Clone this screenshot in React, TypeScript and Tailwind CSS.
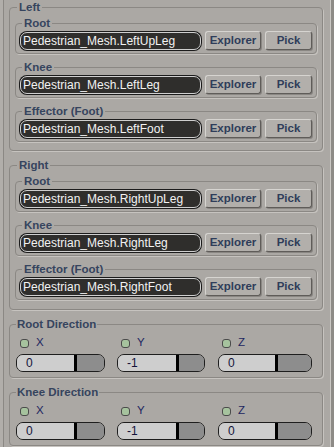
import React from "react";

const font = { fontFamily: '"Liberation Sans", Arial, sans-serif' };

type BoxProps = {
  label: string;
  legendClass?: string;
  className?: string;
  children: React.ReactNode;
};

const Group: React.FC<BoxProps> = ({ label, legendClass = "", className = "", children }) => {
  return (
    <fieldset
      className={
        "border border-[#8b8884] rounded-[4px] shadow-[1px_1px_0_#c6c3bf] " + className
      }
    >
      <legend
        className={
          "text-[11.5px] leading-[13px] font-bold text-[#36445e] " + legendClass
        }
      >
        {label}
      </legend>
      {children}
    </fieldset>
  );
};

const BoneRow: React.FC<{ label: string; value: string }> = ({ label, value }) => {
  return (
    <Group label={label} className="px-[4px] pt-[1px] pb-[3px]" legendClass="ml-[2px] px-[2px]">
      <div className="h-[19px] flex items-end gap-[4px]">
        <div className="flex-1 h-[18px] rounded-[7px] bg-[#2f2e2c] border border-[#cfcfcf] shadow-[0_0_0_1px_#1c1c1c] flex items-center pl-[2px] text-[12px] text-[#f2f2f2] leading-none">
          {value}
        </div>
        <button className="w-[56px] h-[19px] rounded-[3px] bg-[#b2afab] border border-[#d6d4d0] border-b-[#5f5c59] border-r-[#5f5c59] shadow-[1px_1px_0_#8a8783] text-[11.5px] font-bold text-[#2f3d5a] leading-none">
          Explorer
        </button>
        <button className="w-[47px] h-[19px] rounded-[3px] bg-[#b2afab] border border-[#d6d4d0] border-b-[#5f5c59] border-r-[#5f5c59] shadow-[1px_1px_0_#8a8783] text-[11.5px] font-bold text-[#2f3d5a] leading-none">
          Pick
        </button>
      </div>
    </Group>
  );
};

const Side: React.FC<{ label: string; side: string; pb: string }> = ({ label, side, pb }) => {
  return (
    <Group label={label} className={"px-[5px] pt-[3px] " + pb} legendClass="ml-[2px] px-[2px]">
      <div className="flex flex-col gap-[7px]">
        <BoneRow label="Root" value={`Pedestrian_Mesh.${side}UpLeg`} />
        <BoneRow label="Knee" value={`Pedestrian_Mesh.${side}Leg`} />
        <BoneRow label="Effector (Foot)" value={`Pedestrian_Mesh.${side}Foot`} />
      </div>
    </Group>
  );
};

const axes = [
  { name: "X", value: "0", slider: "w-[89px]", knob: "w-[30px]" },
  { name: "Y", value: "-1", slider: "w-[88px]", knob: "w-[28px]" },
  { name: "Z", value: "0", slider: "w-[94px]", knob: "w-[36px]" },
];

const Direction: React.FC<{ label: string }> = ({ label }) => {
  return (
    <Group label={label} className="pl-[6px] pt-[6px] pb-[5px]" legendClass="px-[1px]">
      <div className="flex">
        {axes.map((a) => (
          <div key={a.name} className="w-[101px] flex flex-col gap-[5px]">
            <div className="h-[12px] flex items-center pl-[4px] gap-[7px]">
              <span className="block w-[9px] h-[9px] rounded-[3px] bg-[#a6c39e] border border-[#4b4b4b]" />
              <span className="text-[11.5px] leading-none text-[#1d2660]">{a.name}</span>
            </div>
            <div
              className={
                a.slider +
                " h-[18px] rounded-[7px] border border-[#1e1e1e] overflow-hidden flex"
              }
            >
              <div className="flex-1 bg-[#cecece] flex items-center pl-[9px] text-[12px] leading-none text-[#14143a]">
                {a.value}
              </div>
              <div className={a.knob + " bg-[#8d8d8d] border-l-[3px] border-black"} />
            </div>
          </div>
        ))}
      </div>
    </Group>
  );
};

const App: React.FC = () => {
  return (
    <div className="w-[334px] h-[447px] bg-[#aba8a4] flex overflow-hidden" style={font}>
      {/* left frame edge */}
      <div className="w-[3px] bg-[#b1aeaa]" />
      <div className="w-[1px] bg-[#8b8884]" />

      <div className="flex-1 pl-[5px] pr-[7px] pt-[1px] flex flex-col gap-[8px]">
        <Side label="Left" side="Left" pb="pb-[8px]" />
        <Side label="Right" side="Right" pb="pb-[9px]" />
        <Direction label="Root Direction" />
        <Direction label="Knee Direction" />
      </div>

      {/* right frame edge */}
      <div className="w-[1px] bg-[#cbc8c4]" />
      <div className="w-[3px] bg-[#8e8b87]" />
    </div>
  );
};

export default App;
